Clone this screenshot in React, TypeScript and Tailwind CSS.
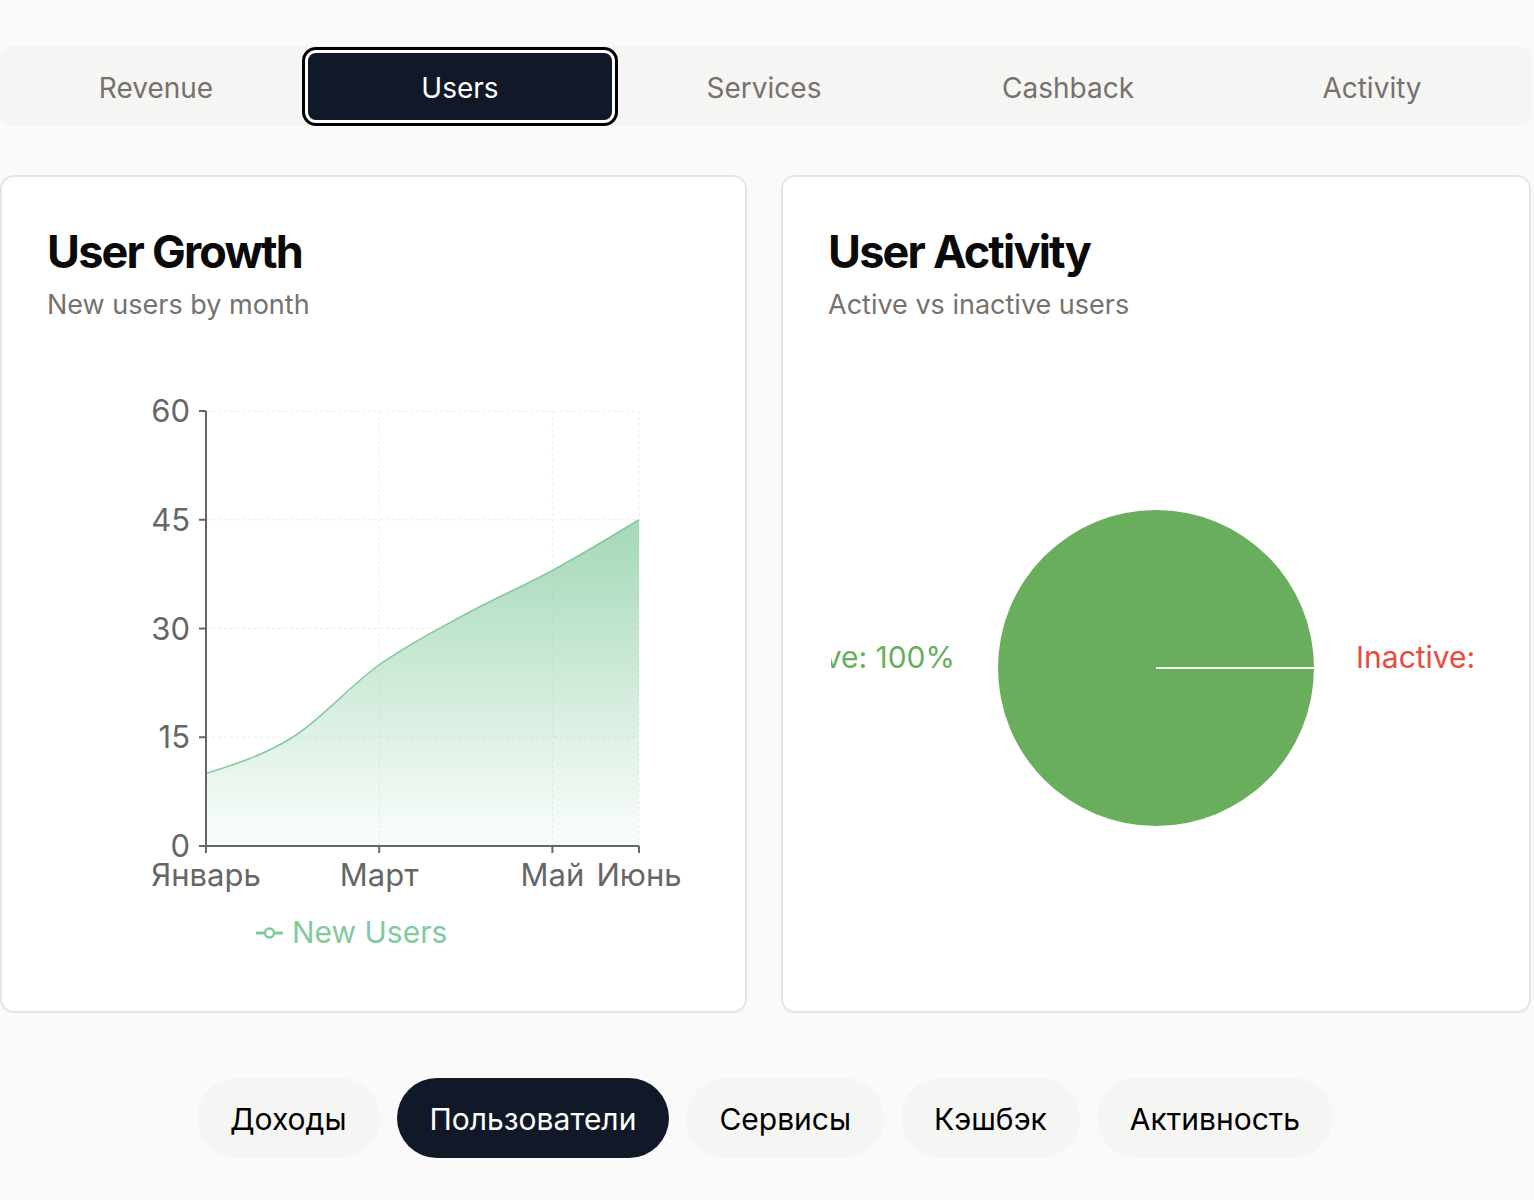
const tabs = ["Revenue", "Users", "Services", "Cashback", "Activity"];
const pills = ["Доходы", "Пользователи", "Сервисы", "Кэшбэк", "Активность"];

const months = ["Январь", "Февраль", "Март", "Апрель", "Май", "Июнь"];
const values = [10, 15, 25, 32, 38, 45];

const X0 = 205;
const X1 = 638;
const Y0 = 846;
const Y1 = 411;
const px = (i: number) => X0 + ((X1 - X0) / 5) * i;
const py = (v: number) => Y0 - ((Y0 - Y1) / 60) * v;

// d3 monotoneX, same as the chart lib uses
function monotonePath(pts: [number, number][]) {
  const n = pts.length;
  const sign = (v: number) => (v < 0 ? -1 : 1);
  const t: number[] = new Array(n).fill(0);
  for (let i = 1; i < n - 1; i++) {
    const [x0, y0] = pts[i - 1];
    const [x1, y1] = pts[i];
    const [x2, y2] = pts[i + 1];
    const h0 = x1 - x0;
    const h1 = x2 - x1;
    const s0 = (y1 - y0) / h0;
    const s1 = (y2 - y1) / h1;
    const p = (s0 * h1 + s1 * h0) / (h0 + h1);
    t[i] = (sign(s0) + sign(s1)) * Math.min(Math.abs(s0), Math.abs(s1), 0.5 * Math.abs(p)) || 0;
  }
  const h = pts[1][0] - pts[0][0];
  t[0] = (3 * (pts[1][1] - pts[0][1]) / h - t[1]) / 2;
  const hl = pts[n - 1][0] - pts[n - 2][0];
  t[n - 1] = (3 * (pts[n - 1][1] - pts[n - 2][1]) / hl - t[n - 2]) / 2;
  let d = `M${pts[0][0]},${pts[0][1]}`;
  for (let i = 1; i < n; i++) {
    const [x0, y0] = pts[i - 1];
    const [x1, y1] = pts[i];
    const dx = (x1 - x0) / 3;
    d += `C${x0 + dx},${y0 + dx * t[i - 1]},${x1 - dx},${y1 - dx * t[i]},${x1},${y1}`;
  }
  return d;
}

function GrowthChart() {
  const pts = values.map((v, i) => [px(i), py(v)] as [number, number]);
  const line = monotonePath(pts);
  const area = `${line}L${X1},${Y0}L${X0},${Y0}Z`;
  const yTicks = [0, 15, 30, 45, 60];
  const xShown = [0, 2, 4, 5];
  return (
    <svg width={656} height={600} viewBox="46 370 656 600" className="block">
      <defs>
        <linearGradient id="usersFill" x1="0" y1="0" x2="0" y2="1">
          <stop offset="5%" stopColor="#82ca9d" stopOpacity={0.7} />
          <stop offset="95%" stopColor="#82ca9d" stopOpacity={0.06} />
        </linearGradient>
      </defs>
      {yTicks.slice(1).map((v) => (
        <line key={v} x1={X0} x2={X1} y1={py(v)} y2={py(v)} stroke="#ececec" strokeDasharray="3 3" />
      ))}
      {xShown.map((i) => (
        <line key={i} x1={px(i)} x2={px(i)} y1={Y1} y2={Y0} stroke="#ececec" strokeDasharray="3 3" />
      ))}
      <path d={area} fill="url(#usersFill)" />
      <path d={line} fill="none" stroke="#82ca9d" strokeWidth={1.5} />
      <line x1={X0} x2={X0} y1={Y1} y2={Y0} stroke="#666" strokeWidth={2} />
      <line x1={X0} x2={X1} y1={Y0} y2={Y0} stroke="#666" strokeWidth={2} />
      {yTicks.map((v) => (
        <g key={v}>
          <line x1={X0 - 7} x2={X0} y1={py(v)} y2={py(v)} stroke="#666" strokeWidth={2} />
          <text x={X0 - 16} y={py(v) + 11} textAnchor="end" fill="#666" fontSize={31}>
            {v}
          </text>
        </g>
      ))}
      {xShown.map((i) => (
        <g key={i}>
          <line x1={px(i)} x2={px(i)} y1={Y0} y2={Y0 + 7} stroke="#666" strokeWidth={2} />
          <text x={px(i)} y={Y0 + 40} textAnchor="middle" fill="#666" fontSize={31}>
            {months[i]}
          </text>
        </g>
      ))}
      <line x1={255} x2={282} y1={933} y2={933} stroke="#82ca9d" strokeWidth={3} />
      <circle cx={268.5} cy={933} r={4.5} fill="#fff" stroke="#82ca9d" strokeWidth={2.5} />
      <text x={291} y={943} fill="#82ca9d" fontSize={30}>
        New Users
      </text>
    </svg>
  );
}

function ActivityPie() {
  const cx = 1156;
  const cy = 668;
  const r = 158;
  return (
    <svg width={656} height={600} viewBox="828 370 656 600" className="block">
      <defs>
        <clipPath id="pieClip">
          <rect x={831} y={370} width={650} height={600} />
        </clipPath>
      </defs>
      <g clipPath="url(#pieClip)">
        <circle cx={cx} cy={cy} r={r} fill="#68ae5c" />
        <line x1={cx} x2={cx + r} y1={cy} y2={cy} stroke="#fff" strokeWidth={2} />
        <text x={955} y={657} textAnchor="end" dominantBaseline="central" fill="#68ae5c" fontSize={30}>
          Active: 100%
        </text>
        <text x={1356} y={657} textAnchor="start" dominantBaseline="central" fill="#e74c3c" fontSize={30}>
          Inactive: 0%
        </text>
      </g>
    </svg>
  );
}

function Card({ title, subtitle, children }: { title: string; subtitle: string; children: React.ReactNode }) {
  return (
    <div className="h-[838px] rounded-[14px] border-2 border-[#e7e5e4] bg-white px-[45px] pt-[52px] overflow-hidden">
      <h2 className="text-[45px] font-bold leading-none tracking-[-0.04em] text-[#0a0a0a]">{title}</h2>
      <p className="mt-[17px] text-[27px] leading-none text-[#78716c]">{subtitle}</p>
      <div className="mt-[52px]">{children}</div>
    </div>
  );
}

export default function App() {
  return (
    <div className="min-h-screen w-[1534px] bg-[#fafafa] pt-[46px] font-['Inter',sans-serif]">
      <div className="w-[1532px]">
        <div className="grid h-[80px] grid-cols-5 items-center rounded-[12px] bg-[#f5f5f4] pl-[4px] pr-[8px]">
          {tabs.map((t) => (
            <button
              key={t}
              type="button"
              className={
                t === "Users"
                  ? "h-[67px] rounded-[8px] bg-[#111827] pt-[3px] text-[28px] text-white ring-[3px] ring-white outline-[3px] outline-black outline-offset-[3px] outline-solid"
                  : "h-[67px] rounded-[8px] pt-[3px] text-[28px] text-[#78716c]"
              }
            >
              {t}
            </button>
          ))}
        </div>

        <div className="mt-[49px] grid grid-cols-[747px_750px] gap-[34px]">
          <Card title="User Growth" subtitle="New users by month">
            <GrowthChart />
          </Card>
          <Card title="User Activity" subtitle="Active vs inactive users">
            <ActivityPie />
          </Card>
        </div>

        <div className="mt-[65px] flex justify-center gap-[17px] pr-[2px]">
          {pills.map((p) => (
            <button
              key={p}
              type="button"
              className={
                p === "Пользователи"
                  ? "h-[80px] rounded-full bg-[#111827] px-[33px] pt-[2px] text-[30px] text-white"
                  : "h-[80px] rounded-full bg-[#f5f5f4] px-[33px] pt-[2px] text-[30px] text-black"
              }
            >
              {p}
            </button>
          ))}
        </div>
      </div>
    </div>
  );
}
